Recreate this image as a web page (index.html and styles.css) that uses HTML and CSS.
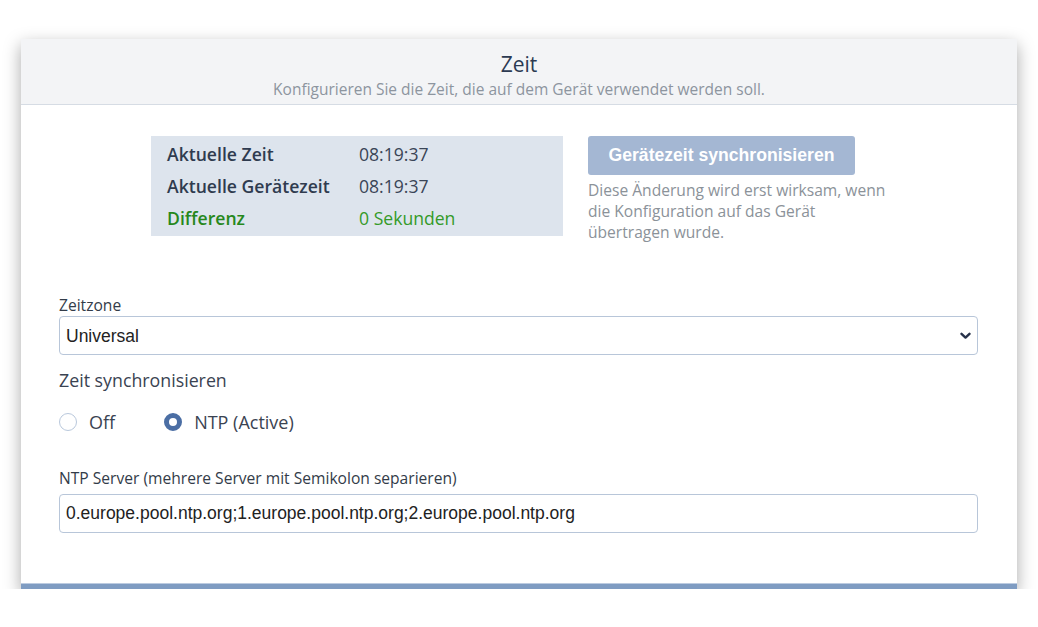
FILE: index.html
```html
<!DOCTYPE html>
<html lang="de">
<head>
<meta charset="utf-8">
<title>Zeit</title>
<link rel="stylesheet" href="styles.css">
</head>
<body>
<div class="page">
  <div class="card">
    <div class="card-header">
      <h1 class="title">Zeit</h1>
      <p class="subtitle">Konfigurieren Sie die Zeit, die auf dem Gerät verwendet werden soll.</p>
    </div>
    <div class="card-body">
      <div class="sync-row">
        <div class="info-box">
          <div class="info-label">Aktuelle Zeit</div><div class="info-value">08:19:37</div>
          <div class="info-label">Aktuelle Gerätezeit</div><div class="info-value">08:19:37</div>
          <div class="info-label diff">Differenz</div><div class="info-value diff">0 Sekunden</div>
        </div>
        <div class="sync-col">
          <button class="sync-btn" type="button">Gerätezeit synchronisieren</button>
          <p class="help">Diese Änderung wird erst wirksam, wenn die Konfiguration auf das Gerät übertragen wurde.</p>
        </div>
      </div>

      <label class="field-label" for="tz">Zeitzone</label>
      <div class="select-wrap">
        <select id="tz" class="control select"><option>Universal</option></select>
        <svg class="chevron" width="11" height="8" viewBox="0 0 11 8"><path d="M1.5 1.8 L5.5 5.6 L9.5 1.8" fill="none" stroke="#27324a" stroke-width="2.4" stroke-linecap="round" stroke-linejoin="round"/></svg>
      </div>

      <div class="section-title">Zeit synchronisieren</div>
      <div class="radios">
        <label class="radio"><input type="radio" name="sync"><span>Off</span></label>
        <label class="radio"><input type="radio" name="sync" checked><span>NTP (Active)</span></label>
      </div>

      <label class="field-label ntp-label" for="ntp">NTP Server (mehrere Server mit Semikolon separieren)</label>
      <input id="ntp" class="control" type="text" value="0.europe.pool.ntp.org;1.europe.pool.ntp.org;2.europe.pool.ntp.org">
    </div>
    <div class="card-footer"></div>
  </div>
</div>
</body>
</html>
```

FILE: styles.css
```css
html, body {
  margin: 0;
  padding: 0;
  background: #ffffff;
}

body {
  font-family: "Open Sans", "Noto Sans", sans-serif;
  color: #2f3a4b;
}

.page {
  padding: 39px 21px 0 21px;
}

.card {
  width: 996px;
  background: #ffffff;
  box-shadow: 0 6px 16px rgba(0, 0, 0, 0.34);
}

.card-header {
  height: 66px;
  background: #f3f4f6;
  border-bottom: 1px solid #d6dce4;
  text-align: center;
  box-sizing: border-box;
  padding-top: 10px;
}

.title {
  margin: 0;
  font-size: 21px;
  font-weight: 400;
  line-height: 30px;
  color: #2c3a52;
}

.subtitle {
  margin: 0;
  font-size: 15.5px;
  line-height: 20px;
  color: #8d959f;
}

.card-body {
  padding: 31px 39px 50px 38px;
}

.sync-row {
  display: flex;
  justify-content: center;
  gap: 25px;
  margin-bottom: 52px;
}

.info-box {
  width: 412px;
  box-sizing: border-box;
  background: #dde4ed;
  padding: 2px 16px 2px;
  display: grid;
  grid-template-columns: 192px 1fr;
  grid-auto-rows: 32px;
  align-items: center;
  align-self: flex-start;
  font-size: 17.6px;
}

.info-label {
  font-weight: 600;
  color: #2f3b4f;
}

.info-value {
  color: #3a4557;
}

.info-label.diff {
  color: #26881c;
}

.info-value.diff {
  color: #349a28;
}

.sync-col {
  width: 298px;
}

.sync-btn {
  display: block;
  width: 267px;
  height: 39px;
  border: none;
  border-radius: 3px;
  background: #a4b7d3;
  color: #ffffff;
  font-family: "Liberation Sans", Arial, sans-serif;
  font-weight: 700;
  font-size: 17.6px;
  padding: 0;
}

.help {
  margin: 5px 0 0;
  font-size: 15.6px;
  line-height: 21px;
  color: #8b9299;
}

.field-label {
  display: block;
  font-size: 15.6px;
  line-height: 20px;
  color: #333c49;
  margin-bottom: 1px;
}

.ntp-label {
  margin-bottom: 6px;
}

.control {
  display: block;
  width: 100%;
  height: 39px;
  box-sizing: border-box;
  border: 1px solid #b8c6d9;
  border-radius: 4px;
  background: #ffffff;
  font-family: "Liberation Sans", Arial, sans-serif;
  font-size: 17.5px;
  color: #222222;
  padding: 0 6px;
  margin: 0;
  outline: none;
}

.select-wrap {
  position: relative;
}

.select {
  appearance: none;
  -webkit-appearance: none;
}

.chevron {
  position: absolute;
  right: 7px;
  top: 16px;
  pointer-events: none;
}

.section-title {
  margin-top: 13px;
  font-size: 17.8px;
  line-height: 24px;
  color: #3a4352;
}

.radios {
  display: flex;
  gap: 49px;
  margin-top: 18px;
  margin-bottom: 34px;
}

.radio {
  display: flex;
  align-items: center;
  gap: 12px;
  font-size: 18px;
  line-height: 24px;
  color: #3a4352;
}

.radio input {
  appearance: none;
  -webkit-appearance: none;
  width: 18px;
  height: 18px;
  margin: 0;
  border-radius: 50%;
  border: 1.5px solid #b9c8dc;
  background: #ffffff;
  box-sizing: border-box;
}

.radio input:checked {
  border: 5.5px solid #4b6ea4;
  background: #ffffff;
}

.card-footer {
  height: 5px;
  border-top: 1px solid #bccbe0;
  background: #7f9cc2;
}
```
